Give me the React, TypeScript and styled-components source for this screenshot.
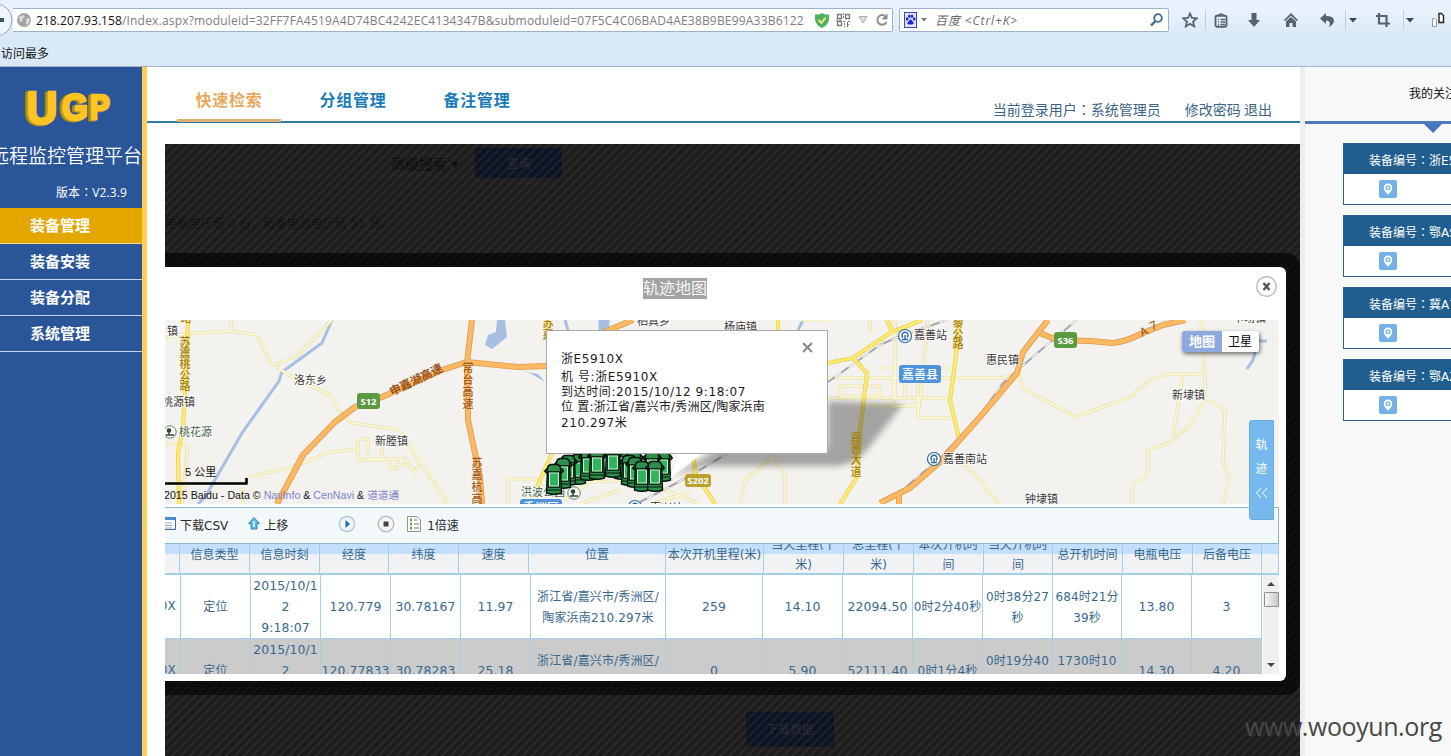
import React from "react";
import styled, { createGlobalStyle } from "styled-components";

const latin = `"Open Sans", "Noto Sans CJK SC", sans-serif`;
const ui = `"DejaVu Sans", "Noto Sans CJK SC", sans-serif`;

const Global = createGlobalStyle`
  html, body { margin: 0; padding: 0; background: #fff; }
  body { overflow: hidden; font-family: ${ui}; font-size: 12px; }
  * { box-sizing: border-box; }
  svg { display: block; flex: none; }
`;

const Page = styled.div`
  position: relative;
  display: flex;
  flex-direction: column;
  width: 1451px;
  height: 756px;
  overflow: hidden;
`;

/* centred full-width colon */
const Colon = styled.span`
  font-family: "Noto Sans CJK TC", sans-serif;
`;

/* ---------- browser chrome ---------- */

const Chrome = styled.header`
  flex: none;
  height: 67px;
  background: linear-gradient(#e4f0fa 0, #e9f3fc 8px, #d9e8f6 40px, #d9e8f6);
  border-bottom: 1px solid #9fb3c9;
`;

const ChromeRow = styled.div`
  display: flex;
  align-items: center;
  height: 40px;
`;

const BackButton = styled.div`
  flex: none;
  width: 13px;
  height: 40px;
`;

const AddressBar = styled.div`
  display: flex;
  align-items: center;
  width: 880px;
  height: 24px;
  background: #fff;
  border: 1px solid #9db1c8;
  border-left: 0;
  border-radius: 0 2px 2px 0;
  padding-left: 4px;
  font: 12px ${latin};
  color: #7d7d7d;
`;

const Url = styled.div`
  width: 771px;
  margin-left: 5px;
  letter-spacing: 0.19px;
  overflow: hidden;
  white-space: nowrap;
  b { color: #111; font-weight: 400; letter-spacing: 0.07px; }
`;

const AddressIcons = styled.div`
  display: flex;
  align-items: center;
  gap: 7px;
  margin-left: 8px;
`;

const SearchBar = styled.div`
  display: flex;
  align-items: center;
  width: 270px;
  height: 24px;
  margin-left: 6px;
  padding: 0 5px 0 4px;
  background: #fff;
  border: 1px solid #9db1c8;
  border-radius: 2px;
  color: #6c6c6c;
  font: italic 12px ${latin};
`;

const SearchHint = styled.span`
  flex: 1;
  margin-left: 8px;
  letter-spacing: 0.9px;
  white-space: nowrap;
`;

const Tools = styled.div`
  display: flex;
  align-items: center;
  margin-left: 6px;
`;

const Tool = styled.div<{ $w: number; $gap?: number; $line?: boolean }>`
  display: flex;
  flex: none;
  align-items: center;
  justify-content: center;
  width: ${(p) => p.$w}px;
  height: 20px;
  margin-left: ${(p) => p.$gap ?? 0}px;
  border-left: ${(p) => (p.$line ? "1px solid #c0cedd" : "0")};
`;

const Bookmarks = styled.div`
  height: 26px;
  padding: 2px 0 0 1px;
  line-height: 25px;
  color: #111;
`;

/* ---------- sidebar ---------- */

const Body = styled.div`
  display: flex;
  flex: 1;
  min-height: 0;
`;

const Sidebar = styled.aside`
  flex: none;
  width: 147px;
  background: #2a5699;
  border-right: 5px solid #fdcf50;
  color: #fff;
`;

const Brand = styled.div`
  height: 141px;
  overflow: hidden;
`;

const Platform = styled.div`
  display: flex;
  justify-content: flex-end;
  margin-top: 8px;
  font-size: 19px;
  font-weight: 350;
  line-height: 28px;
  white-space: nowrap;
`;

const Version = styled.div`
  margin: 12px 0 0 56px;
  font: 12px/20px ${latin};
  letter-spacing: 0.1px;
  white-space: nowrap;
`;

const MenuItem = styled.div<{ $active?: boolean }>`
  height: 36px;
  padding-left: 30px;
  border-bottom: 1px solid ${(p) => (p.$active ? "#f8dc8a" : "#c4d2e8")};
  background: ${(p) => (p.$active ? "#e4a700" : "transparent")};
  font-size: 15px;
  font-weight: 700;
  line-height: 37px;
`;

/* ---------- main ---------- */

const Main = styled.main`
  display: flex;
  flex: none;
  flex-direction: column;
  width: 1153px;
  background: #fff;
`;

const TabBar = styled.nav`
  display: flex;
  flex: none;
  height: 56px;
  padding-left: 30px;
  border-bottom: 2px solid #2f7ba5;
`;

const Tab = styled.div<{ $active?: boolean }>`
  width: 104px;
  height: 55px;
  margin-right: 20px;
  border-bottom: 3px solid ${(p) => (p.$active ? "#dcb06f" : "transparent")};
  color: ${(p) => (p.$active ? "#e9a95c" : "#1a7cb8")};
  font-size: 16px;
  font-weight: 700;
  letter-spacing: 0.8px;
  line-height: 67px;
  text-align: center;
`;

const Account = styled.div`
  display: flex;
  gap: 24px;
  height: 54px;
  margin: 0 28px 0 auto;
  color: #3b6488;
  font: 14px/84px "Noto Sans CJK SC", sans-serif;
  white-space: nowrap;
`;

const Workspace = styled.section`
  position: relative;
  flex: 1;
  margin: 21px 0 0 18px;
  overflow: hidden;
  background: #1b1b1b;
  color: #080808;
  &::after {
    content: "";
    position: absolute;
    inset: 0;
    background: repeating-linear-gradient(135deg, rgba(255, 255, 255, 0.012) 0 3.2px, rgba(255, 255, 255, 0.07) 4.4px 5.2px, rgba(255, 255, 255, 0.012) 6.36px);
  }
`;

const Filter = styled.div`
  display: flex;
  align-items: center;
  width: 402px;
  height: 38px;
  padding-left: 226px;
  font-size: 14px;
  white-space: nowrap;
`;

const FilterLine = styled.div`
  width: 305px;
  height: 1px;
  background: #141414;
`;

const DimButton = styled.div<{ $w: number; $h: number }>`
  flex: none;
  width: ${(p) => p.$w}px;
  height: ${(p) => p.$h}px;
  border-radius: 2px;
  background: #0b1020;
  color: #22272d;
  font-size: 12px;
  line-height: ${(p) => p.$h + 2}px;
  text-align: center;
`;

const Search = styled.div`
  margin-left: 17px;
`;

const Summary = styled.div`
  margin-top: 31px;
  height: 20px;
  line-height: 20px;
  letter-spacing: -0.1px;
  color: #0d0d0d;
  white-space: nowrap;
`;

const Download = styled.div`
  margin: 478px 0 0 581px;
`;

/* ---------- dialog ---------- */

const DialogFrame = styled.div`
  position: absolute;
  z-index: 2;
  left: 0;
  top: 109px;
  width: 1135px;
  height: 442px;
  padding: 14px 14px 14px 0;
  border-radius: 0 14px 14px 0;
  background: rgba(0, 0, 0, 0.6);
`;

const Dialog = styled.div`
  position: relative;
  height: 414px;
  border-radius: 0 6px 6px 0;
  background: #fff;
`;

const DialogTitle = styled.div`
  display: flex;
  height: 53px;
  padding: 11px 9px 0 478px;
  justify-content: space-between;
`;

const TitleText = styled.div`
  height: 21px;
  background: #a3a3a3;
  color: #fff;
  font-size: 16px;
  font-weight: 350;
  line-height: 22px;
`;

const MapArea = styled.div`
  position: relative;
  width: 1114px;
  height: 184px;
  overflow: hidden;
  background: #f3f2ef;
`;

const Popup = styled.div`
  position: absolute;
  left: 381px;
  top: 10px;
  width: 282px;
  height: 124px;
  padding: 19px 14px 0;
  border: 1px solid #a9a9a9;
  background: #fff;
  color: #1c1c1c;
  line-height: 15.2px;
  letter-spacing: 0.2px;
  white-space: nowrap;
`;

const PopupHead = styled.div`
  height: 20px;
  line-height: 18px;
`;

const Wide = styled.span`
  letter-spacing: 0.6px;
`;

const PopupClose = styled.div`
  position: absolute;
  right: 14px;
  top: 11px;
`;

const MapSwitch = styled.div`
  position: absolute;
  left: 1017px;
  top: 11px;
  display: flex;
  width: 77px;
  height: 21px;
  border-radius: 2px;
  background: #fff;
  box-shadow: 1px 2px 4px rgba(0, 0, 0, 0.55);
  color: #000;
  font: 13px/20px "Noto Sans CJK SC", sans-serif;
  text-align: center;
`;

const SwitchItem = styled.div<{ $on?: boolean }>`
  width: ${(p) => (p.$on ? 40 : 36)}px;
  background: ${(p) => (p.$on ? "#8ea8e0" : "transparent")};
  color: ${(p) => (p.$on ? "#fff" : "#000")};
  font-weight: ${(p) => (p.$on ? 700 : 400)};
  font-size: ${(p) => (p.$on ? 13 : 12)}px;
  border-radius: 2px 0 0 2px;
`;

const TrackTab = styled.div`
  position: absolute;
  left: 1084px;
  top: 153px;
  width: 25px;
  height: 100px;
  padding-top: 12px;
  border: 1px solid #69addf;
  border-radius: 3px 0 0 3px;
  background: #76b9ef;
  color: #fff;
  line-height: 24px;
  text-align: center;
`;

const Toolbar = styled.div`
  display: flex;
  align-items: center;
  width: 1114px;
  height: 37px;
  margin-top: 3px;
  padding-bottom: 4px;
  border: solid #86b8d4;
  border-width: 1px 1px 1px 0;
  background: #f3f8fb;
  color: #2b2b2b;
`;

const ToolLabel = styled.span<{ $l: number; $r: number }>`
  margin: 2px ${(p) => p.$r}px 0 ${(p) => p.$l}px;
  white-space: nowrap;
`;

const Grid = styled.div`
  width: 1114px;
  color: #39688f;
`;

const GridHead = styled.div`
  display: flex;
  height: 31px;
  overflow: hidden;
  background: linear-gradient(#c4dffc 10px, #f1f2f4 10px);
  border-bottom: 2px solid #a5cfe8;
`;

const HeadCell = styled.div<{ $w: number }>`
  display: flex;
  flex: none;
  align-items: center;
  justify-content: center;
  width: ${(p) => p.$w}px;
  height: 31px;
  padding-bottom: 9px;
  border-right: 1px solid #a5cfe8;
  line-height: 20px;
  text-align: center;
  white-space: pre;
`;

const GridBody = styled.div`
  display: flex;
  justify-content: space-between;
  height: 99px;
  overflow: hidden;
`;

const Row = styled.div<{ $alt?: boolean }>`
  display: flex;
  width: 1097px;
  height: 64px;
  background: ${(p) => (p.$alt ? "#cbcbcb" : "#fff")};
  border-bottom: 1px solid #a5cfe8;
`;

const Cell = styled.div<{ $w: number; $end?: boolean; $cjk?: boolean }>`
  display: flex;
  flex: none;
  align-items: center;
  justify-content: ${(p) => (p.$end ? "flex-end" : "center")};
  width: ${(p) => p.$w}px;
  padding-right: ${(p) => (p.$end ? 4 : 0)}px;
  padding-top: ${(p) => (p.$cjk ? 2 : 0)}px;
  border-right: 1px solid #a5cfe8;
  letter-spacing: 0.15px;
  line-height: 21px;
  text-align: center;
  white-space: pre;
  overflow: hidden;
`;

const Digits = styled.span`
  font-size: 12.4px;
  letter-spacing: 0.1px;
`;

const Scrollbar = styled.div`
  display: flex;
  flex-direction: column;
  align-items: center;
  width: 16px;
  background: #f0f0f0;
`;

const Thumb = styled.div`
  width: 15px;
  height: 15px;
  margin: 6px 0 auto;
  border: 1px solid #8f8f8f;
  border-radius: 1px;
  background: linear-gradient(90deg, #f7f7f7, #c9c9c9);
`;

/* ---------- right panel ---------- */

const Watch = styled.aside`
  flex: none;
  width: 151px;
  border-left: 5px solid #eeeeee;
  background: #f8f8f8;
`;

const WatchTitle = styled.div`
  height: 57px;
  padding-left: 104px;
  border-bottom: 3px solid #507ab6;
  color: #111;
  line-height: 54px;
  white-space: nowrap;
  overflow: hidden;
`;

const Pointer = styled.div`
  width: 0;
  margin-left: 119px;
  border: 9px solid transparent;
  border-top-color: #4377c6;
  border-bottom: 0;
`;

const Cards = styled.div`
  display: flex;
  flex-direction: column;
  gap: 10px;
  padding: 10px 0 0 38px;
`;

const Card = styled.div`
  width: 180px;
  height: 62px;
  border: 1px solid #2f5f8b;
  background: #fff;
`;

const CardHead = styled.div`
  height: 30px;
  padding-left: 25px;
  background: #1f5e8e;
  color: #fff;
  line-height: 32px;
  white-space: nowrap;
`;

const CardBody = styled.div`
  padding: 6px 0 0 35px;
`;

const Watermark = styled.div`
  position: absolute;
  z-index: 5;
  left: 1245px;
  top: 708px;
  color: #484848;
  font: 25px/36px "Open Sans", sans-serif;
  letter-spacing: -0.42px;
`;

/* ---------- map drawing ---------- */

const minor = [
  "M165 338L185 334L230 331L257 335L270 362L290 376L330 395L340 412L352 423L400 430L412 450L448 504",
  "M231 320V331M332 320L298 355L273 366",
  "M248 478L260 474L290 468L330 452L358 449V439H368V459H398V465H405V458L415 473L420 460M358 449V460H382V440M390 459V468H398",
  "M508 504V479H535L545 490M165 443L188 445L182 504M243 487V504",
  "M565 500L590 482L640 480L700 504M650 504L690 492M580 504L620 490",
  "M775 455L745 480L740 504M770 455L785 475V504M828 378H1000L1017 374M840 386H880V396H840ZM860 405L918 406M895 320V400M928 320L918 418H951M870 320V333M880 368H950",
  "M828 398H948M918 385V418M894 373V408M1019 373L1023 388L1075 417L1130 397L1150 380L1168 374H1204M1200 320L1204 330L1205 398L1225 410L1223 460L1229 478L1223 504M1183 374L1172 442L1148 450V475L1132 485V504M1205 400L1190 425L1175 438M962 463L978 477L998 504",
  "M890 408L918 404M905 370V398M750 320L755 330M800 320H828",
];
const yellow = [
  "M188 320L187 350L183 427L178 453L179 504",
  "M828 363L853 358L867 373L860 430L857 477L840 504M853 358L890 333L922 320M887 320L893 334",
  "M960 320L955 363L950 400L960 443",
  "M693 450L695 473L715 504M552 453L537 487M548 320V332M778 320V332",
];
const orange = [
  "M277 504L303 455L335 422L355 407L382 397L442 370L467 362L518 367L547 366M602 333L633 320",
  "M472 320L467 363L468 420L480 477L482 504",
  "M1048 320L1023 352L1017 373L980 417L940 462L910 488L880 503M899 494V504",
  "M1040 333L1057 340L1090 341L1113 343Q1125 342 1143 333L1163 325L1185 320",
];
const rails = ["M1077 320L1048 344L1027 362L1003 383L980 415L940 458L900 492", "M947 320L900 336L880 345L828 382", "M728 453L690 476L640 502"];

const cars: [number, number][] = [
  [622, 450], [634, 452], [578, 455], [568, 456], [663, 452], [652, 452], [563, 459],
  [588, 451], [597, 450], [613, 448], [629, 456], [635, 458], [642, 462], [554, 465], [655, 462],
];

const Label = ({ x, y, t, s = 11, c = "#3b3b3b", r = 0, b }: { x: number; y: number; t: string; s?: number; c?: string; r?: number; b?: boolean }) => (
  <text x={x} y={y} fontSize={s} fill={c} fontWeight={b ? 600 : 400} transform={r ? `rotate(${r} ${x} ${y})` : undefined}
    stroke="#fff" strokeWidth={b ? 0 : 2} strokeOpacity={0.7} paintOrder="stroke">{t}</text>
);

const Down = ({ x, y, t, c, step = 12, s = 11 }: { x: number; y: number; t: string; c: string; step?: number; s?: number }) => (
  <g fill={c} fontSize={s} textAnchor="middle" fontWeight={500}>
    {t.split("").map((ch, i) => <text key={i} x={x} y={y + i * step}>{ch}</text>)}
  </g>
);

const Shield = ({ x, y, w, t, c }: { x: number; y: number; w: number; t: string; c: string }) => (
  <g>
    <rect x={x} y={y} width={w} height={w > 24 ? 13 : 16} rx={3} fill={c} />
    <text x={x + w / 2} y={y + (w > 24 ? 10 : 11.5)} fontSize={9.5} fontWeight={700} fill="#fff" textAnchor="middle" fontFamily="Open Sans">{t}</text>
  </g>
);

const Station = ({ x, y }: { x: number; y: number }) => (
  <g fill="none" stroke="#2c66a8">
    <circle cx={x} cy={y} r={6.5} fill="#fff" strokeWidth={1.2} />
    <path d={`M${x - 2} ${y + 1.5}A3 3 0 1 1 ${x + 2} ${y + 1.5}M${x} ${y - 1}V${y + 3}M${x - 3} ${y + 3.5}H${x + 3}`} strokeWidth={1.4} />
  </g>
);

const Park = ({ x, y }: { x: number; y: number }) => (
  <g>
    <circle cx={x} cy={y} r={6.2} fill="#fff" stroke="#5f7a62" />
    <path d={`M${x - 4} ${y + 3}H${x + 4}M${x - 1} ${y}V${y + 3}`} stroke="#2c4a30" strokeWidth={1.4} />
    <circle cx={x - 1} cy={y - 1.5} r={2.3} fill="#2c4a30" />
  </g>
);

const MapDrawing = () => (
  <svg width="1114" height="184" viewBox="165 320 1114 184" fontFamily="Noto Sans CJK SC">
    <defs><filter id="soft" x="-10%" y="-10%" width="120%" height="120%"><feGaussianBlur stdDeviation="3" /></filter></defs>
    <g fill="none" stroke="#a6bfe2" strokeWidth={3}>
      <path d="M332 320L322 343L282 372L279 381L242 433L205 497L198 504" />
      <path d="M565 320L568 330M798 330L803 320" strokeWidth={3} />
      <path d="M604 320V330" strokeWidth={11} />
      <path d="M1267 341H1258L1253 360L1247 369" strokeWidth={3} />
    </g>
    <path d="M497 320H505L507 337L492 349L485 345L488 335L496 332Z M518 370L530 373L545 382L538 374Z" fill="#a6bfe2" />
    <g fill="none" strokeLinejoin="round">
      {minor.map((d) => <path key={d} d={d} stroke="#e9e2a6" strokeWidth={3.2} />)}
      {minor.map((d) => <path key={d} d={d} stroke="#fbf9dc" strokeWidth={1.6} />)}
      {rails.map((d) => <path key={d} d={d} stroke="#a5a5ab" strokeWidth={2} />)}
      {rails.map((d) => <path key={d} d={d} stroke="#f7f7f7" strokeWidth={1.3} strokeDasharray="8 9" />)}
      {yellow.map((d) => <path key={d} d={d} stroke="#e5cf58" strokeWidth={4.2} />)}
      {yellow.map((d) => <path key={d} d={d} stroke="#fdea6e" strokeWidth={2.8} />)}
      {orange.map((d) => <path key={d} d={d} stroke="#dd9a4c" strokeWidth={6} />)}
      {orange.map((d) => <path key={d} d={d} stroke="#fcb963" strokeWidth={4.4} />)}
    </g>
    <path d="M828 401L903 404L867 450Q855 464 838 466H705L672 476L720 448H828Z" fill="#000" opacity={0.32} filter="url(#soft)" />
    <Label x={167} y={335} t="镇" /><Label x={294} y={384} t="洛东乡" /><Label x={162} y={406} t="桃源镇" />
    <Label x={179} y={436} t="桃花源" c="#49654c" /><Label x={375} y={445} t="新塍镇" /><Label x={637} y={325} t="栖真乡" />
    <Label x={724} y={331} t="杨庙镇" /><Label x={914} y={339} t="嘉善站" /><Label x={986} y={364} t="惠民镇" />
    <Label x={1172} y={399} t="新埭镇" /><Label x={943} y={463} t="嘉善南站" /><Label x={1025} y={503} t="钟埭镇" />
    <Label x={1233} y={322} t="卡场镇" /><Label x={521} y={496} t="洪波公园" c="#49654c" /><Label x={650} y={512} t="嘉兴站" />
    <Label x={392} y={396} t="申嘉湖高速" c="#9a5218" r={-26} s={11.5} b />
    <Down x={186} y={322} t="路" c="#a5810a" /><Down x={185} y={346} t="苏震桃公路" c="#a5810a" step={11} />
    <Down x={468} y={372} t="常台高速" c="#a25a1e" /><Down x={477} y={467} t="苏嘉杭高" c="#a25a1e" />
    <Down x={548} y={327} t="苏嘉" c="#a5810a" /><Down x={958} y={327} t="黎公路" c="#a5810a" step={10.5} />
    <Down x={856} y={442} t="嘉善大道" c="#a5810a" step={11.2} />
    <g fontSize={12} fill="#8f4a12" fontFamily="Open Sans"><text x={1142} y={337} transform="rotate(-25 1142 337)">A</text><text x={1152} y={331} transform="rotate(-25 1152 331)">7</text></g>
    <Shield x={357} y={393} w={23} t="S12" c="#5a9a41" /><Shield x={1054} y={332} w={23} t="S36" c="#5a9a41" /><Shield x={685} y={474} w={26} t="S202" c="#bda02c" />
    <rect x={899} y={365} width={42} height={18} rx={3} fill="#4f93dc" /><text x={920} y={378.5} fontSize={12} fontWeight={500} fill="#fff" textAnchor="middle">嘉善县</text>
    <rect x={520} y={499} width={42} height={18} rx={3} fill="#4f93dc" /><text x={541} y={512} fontSize={12} fontWeight={500} fill="#fff" textAnchor="middle">秀洲区</text>
    <Station x={905} y={336} /><Station x={934} y={459} /><Station x={635} y={507} />
    <Park x={170} y={432} /><Park x={574} y={493} />
    {cars.map(([x, y], i) => (
      <g key={i} transform={`translate(${x} ${y})`} stroke="#05120a">
        <path d="M-7 8L-9 6L-6 3M7 3L9 6L7 8" fill="none" strokeWidth={1.8} />
        <path d="M-6.500 3Q-6 0 -3 -.5H3Q6 0 6.500 3L7.500 28Q0 30.500 -7.500 28Z" fill="#2c8f4b" strokeWidth={1.4} />
        <path d="M-4.500 8H4.500V21H-4.500Z" fill="#2fb45b" stroke="#cfe6d3" strokeWidth={1.2} />
        <path d="M-5.700 6.700H5.700V22.300H-5.700ZM-7 25H7" fill="none" strokeWidth={1} />
      </g>
    ))}
    <path d="M679 452L670 478L704 452Z" fill="#fff" />
    <path d="M165 483.500H247.500M246.500 478V484" fill="none" stroke="#000" strokeWidth={2.6} />
    <text x={185} y={476} fontSize={11} fill="#111" fontFamily="Liberation Sans, Noto Sans CJK SC">5 公里</text>
    <text x={164} y={499} fontSize={10.6} fill="#111" fontFamily="Liberation Sans, Noto Sans CJK SC" textLength={235} lengthAdjust="spacing">
      2015 Baidu - Data © <tspan fill="#7c7fd0">NavInfo</tspan> &amp; <tspan fill="#7c7fd0">CenNavi</tspan> &amp; <tspan fill="#7c7fd0">道道通</tspan>
    </text>
  </svg>
);

const Caret = ({ c = "#3d4650" }: { c?: string }) => <svg width="8" height="5"><path d="M0 0H8L4 4.500Z" fill={c} /></svg>;

const Pin = () => (
  <svg width="18" height="18" viewBox="0 0 18 18">
    <rect width="18" height="18" rx="2" fill="#73b1e8" />
    <path d="M9 3.500A4.300 4.300 0 0 1 13.300 7.800C13.300 10.500 10.500 12.500 9 15C7.500 12.500 4.700 10.500 4.700 7.800A4.300 4.300 0 0 1 9 3.500Z" fill="#fff" />
    <circle cx="9" cy="7.800" r="1.900" fill="#fff" stroke="#73b1e8" strokeWidth="1.200" />
  </svg>
);

const columns: [string, number, number][] = [
  ["", 15, 16], ["信息类型", 70, 70], ["信息时刻", 70, 70], ["经度", 69, 70], ["纬度", 70, 70], ["速度", 70, 70],
  ["位置", 137, 135], ["本次开机里程(米)", 98, 97], ["当天里程(千\n米)", 80, 80], ["总里程(千\n米)", 70, 70],
  ["本次开机时\n间", 70, 70], ["当天开机时\n间", 69, 70], ["总开机时间", 70, 69], ["电瓶电压", 70, 70], ["后备电压", 69, 70],
];

const rows = [
  ["浙E5910X", "定位", "2015/10/1\n2\n9:18:07", "120.779", "30.78167", "11.97", "浙江省/嘉兴市/秀洲区/\n陶家浜南210.297米", "259", "14.10", "22094.50", "0时2分40秒", "0时38分27\n秒", "684时21分\n39秒", "13.80", "3"],
  ["浙E5910X", "定位", "2015/10/1\n2\n9:17:07", "120.77833", "30.78283", "25.18", "浙江省/嘉兴市/秀洲区/\n陶家浜南210.297米", "0", "5.90", "52111.40", "0时1分4秒", "0时19分40\n秒", "1730时10\n分4秒", "14.30", "4.20"],
];

const isNumeric = (t: string) => /^[\d./:\n]+$/.test(t);

const ink = "#566472";

export default function App() {
  return (
    <Page>
      <Global />
      <Chrome>
        <ChromeRow>
          <BackButton>
            <svg width="13" height="40"><circle cx="-4" cy="20" r="16" fill="#edf4fb" stroke="#8fa3ba" /><path d="M0 18H4V22H0Z" fill="#444f5c" /></svg>
          </BackButton>
          <AddressBar>
            <svg width="14" height="14"><circle cx="7" cy="7" r="7" fill="#a3a3a3" /><path d="M2 4L6 2L8 4L5 6L6 8L3 9ZM9 6L13 5L12 10L9 12Z" fill="#dcdcdc" /></svg>
            <Url><b>218.207.93.158</b>/Index.aspx?moduleid=32FF7FA4519A4D74BC4242EC4134347B&amp;submoduleid=07F5C4C06BAD4AE38B9BE99A33B6122</Url>
            <AddressIcons>
              <svg width="14" height="15"><path d="M0 1.500Q4 2 7 0Q10 2 14 1.500V7Q13 12 7 15Q1 12 0 7Z" fill="#4db45e" /><path d="M3.500 7L6.500 10L10.500 4.500" fill="none" stroke="#f7e78a" strokeWidth="2" /></svg>
              <svg width="15" height="14" fill="none" stroke="#777"><path d="M1.500 1.500H5.500V5.500H1.500ZM9.500 1.500H13.500V5.500H9.500ZM1.500 8.500H5.500V12.500H1.500Z" strokeWidth="1.300" /><path d="M7.500 0V6M7 8.500H10M12 8.500H14M8.500 10V14M11 11.500H14M11.500 9V14M0 7.200H6" strokeDasharray="2 1" /></svg>
              <svg width="10" height="8"><path d="M1 .5H9L5 7Z" fill="#dedede" stroke="#aaa" /></svg>
              <svg width="14" height="14" fill="none" stroke="#8a8f96" strokeWidth="2"><path d="M11 4A4.800 4.800 0 1 0 11.500 9" /><path d="M12 1V6H7" fill="#8a8f96" strokeWidth="1" /></svg>
            </AddressIcons>
          </AddressBar>
          <SearchBar>
            <svg width="14" height="16"><rect x=".5" y=".5" width="12" height="15" fill="#dfe3ff" stroke="#2f4bb5" /><g fill="#2323d6"><ellipse cx="3.200" cy="7" rx="1.300" ry="1.700" /><ellipse cx="5.300" cy="4.300" rx="1.200" ry="1.700" /><ellipse cx="8" cy="4.300" rx="1.200" ry="1.700" /><ellipse cx="10.200" cy="7" rx="1.300" ry="1.700" /><path d="M6.600 7Q8 9 9.800 10.500Q10 13 6.600 12.500Q3 13 3.400 10.500Q5 9 6.600 7Z" /></g></svg>
            <svg width="9" height="4"><path d="M3 0H9L6 3.500Z" fill="#777" /></svg>
            <SearchHint>百度 &lt;Ctrl+K&gt;</SearchHint>
            <svg width="13" height="14" fill="none" stroke="#3d6897"><circle cx="8" cy="5" r="3.800" strokeWidth="1.800" /><path d="M5.500 8L1 12.500" strokeWidth="2.400" /></svg>
          </SearchBar>
          <Tools>
            <Tool $w={30}><svg width="16" height="16"><path d="M8 1.500L9.900 6L14.800 6.400L11.100 9.600L12.200 14.400L8 11.800L3.800 14.400L4.900 9.600L1.200 6.400L6.100 6Z" fill="none" stroke={ink} strokeWidth="1.800" /></svg></Tool>
            <Tool $w={30} $line><svg width="14" height="15" fill="none" stroke={ink} strokeWidth="1.900"><rect x="1.500" y="2.800" width="11" height="11" rx="1.500" /><path d="M4 2.500Q7 -.5 10 2.500M4 6.500H5M6.500 6.500H11M4 9H5M6.500 9H11M4 11.500H5M6.500 11.500H11" strokeWidth="1.400" /></svg></Tool>
            <Tool $w={38}><svg width="14" height="15"><path d="M4.500 0H9.500V7H13L7 14L1 7H4.500Z" fill={ink} /></svg></Tool>
            <Tool $w={36}><svg width="16" height="15"><path d="M8 0L15 7L14 8.300L8 2.800L2 8.300L1 7ZM3 8.500L8 4L13 8.500V14H9.500V10H6.500V14H3Z" fill={ink} /></svg></Tool>
            <Tool $w={36}><svg width="15" height="14"><path d="M6 0V3Q14 3 14 8Q13 12 9 14Q12 8 6 7.500V11L0 5.500Z" fill={ink} /></svg></Tool>
            <Tool $w={14} $line><Caret /></Tool>
            <Tool $w={40} $gap={4}><svg width="16" height="16" fill="none" stroke={ink} strokeWidth="2.200"><path d="M4 1V11.500H15M1 4H11.500V15" /></svg></Tool>
            <Tool $w={12} $line><Caret /></Tool>
            <Tool $w={16} $gap={15}><svg width="14" height="16" fill="#fff"><path d="M1.500 6.500H4L5.500 8V14.500H1.500Z" stroke="#999" /><path d="M8 1.500H10.500L12.500 3.500V10.500H8Z" stroke="#222" strokeWidth="1.400" /></svg></Tool>
          </Tools>
        </ChromeRow>
        <Bookmarks>访问最多</Bookmarks>
      </Chrome>
      <Body>
        <Sidebar>
          <Brand>
            <svg width="142" height="67" viewBox="0 67 142 67" fontFamily="Liberation Sans" fontWeight="700">
              {([["#a88420", -3, 0.5], ["#c09524", -1.5, 0.5], ["#ffc41f", 0, 0]] as [string, number, number][]).map(([c, dx, dy]) => (
                <g key={c} fill={c} stroke={c} strokeWidth="2.400" transform={`translate(${dx} ${dy})`}>
                  <text x="26.500" y="124" fontSize="47" textLength="31" lengthAdjust="spacingAndGlyphs">U</text>
                  <text x="62" y="120" fontSize="37" textLength="26" lengthAdjust="spacingAndGlyphs">G</text>
                  <text x="90" y="119" fontSize="35" textLength="20" lengthAdjust="spacingAndGlyphs">P</text>
                </g>
              ))}
            </svg>
            <Platform>远程监控管理平台</Platform>
            <Version>版本<Colon>：</Colon>V2.3.9</Version>
          </Brand>
          <MenuItem $active>装备管理</MenuItem>
          <MenuItem>装备安装</MenuItem>
          <MenuItem>装备分配</MenuItem>
          <MenuItem>系统管理</MenuItem>
        </Sidebar>
        <Main>
          <TabBar>
            <Tab $active>快速检索</Tab>
            <Tab>分组管理</Tab>
            <Tab>备注管理</Tab>
            <Account><span>当前登录用户<Colon>：</Colon>系统管理员</span><span>修改密码 退出</span></Account>
          </TabBar>
          <Workspace>
            <Filter>高级搜索 ▾<Search><DimButton $w={87} $h={30}>查询</DimButton></Search></Filter>
            <FilterLine />
            <Summary>电瓶电压低 0 台，后备电池电压低 31 台。</Summary>
            <Download><DimButton $w={88} $h={35}>下载数据</DimButton></Download>
            <DialogFrame>
              <Dialog>
                <DialogTitle>
                  <TitleText>轨迹地图</TitleText>
                  <svg width="22" height="22" style={{ marginTop: -2 }}><circle cx="11.500" cy="10.500" r="9.800" fill="#fff" stroke="#bdbdbd" strokeWidth="1.500" /><path d="M8.500 7L14.500 14M14.500 7L8.500 14" stroke="#555" strokeWidth="2.400" /></svg>
                </DialogTitle>
                <MapArea>
                  <MapDrawing />
                  <Popup>
                    <PopupHead><Wide>浙E5910X</Wide></PopupHead>
                    <div><Wide>机 号:浙E5910X</Wide></div>
                    <div><Wide>到达时间:2015/10/12 9:18:07</Wide></div>
                    <div>位 置:浙江省/嘉兴市/秀洲区/陶家浜南</div>
                    <div><Wide>210.297米</Wide></div>
                    <PopupClose><svg width="11" height="11"><path d="M1 1L10 10M10 1L1 10" stroke="#888" strokeWidth="2" /></svg></PopupClose>
                  </Popup>
                  <MapSwitch><SwitchItem $on>地图</SwitchItem><SwitchItem>卫星</SwitchItem></MapSwitch>
                </MapArea>
                <Toolbar>
                  <svg width="11" height="13"><path d="M0 .5H10.500V12.500H0" fill="#fff" stroke="#3f6fa8" /><path d="M0 0H10V3H0Z" fill="#4b8bd0" /><path d="M0 6H7M0 8.500H7M0 11H7" stroke="#8aa9c8" /></svg>
                  <ToolLabel $l={4} $r={20}>下载CSV</ToolLabel>
                  <svg width="12" height="13"><path d="M6 .5L11.500 6.500H9V12H3V6.500H.5Z" fill="#5bb9e4" stroke="#3a86b4" /><path d="M5 4H7V10H5Z" fill="#c9ecfa" /></svg>
                  <ToolLabel $l={4} $r={50}>上移</ToolLabel>
                  <svg width="18" height="18"><circle cx="9" cy="9" r="7.600" fill="#eef6fc" stroke="#b9cadb" strokeWidth="1.500" /><path d="M7.500 5L12 9L7.500 13Z" fill="#2269ae" /></svg>
                  <svg width="18" height="18" style={{ marginLeft: 21 }}><circle cx="9" cy="9" r="7.800" fill="#f6f6f6" stroke="#bdbdbd" strokeWidth="1.500" /><path d="M6.500 6.500H11.500V11.500H6.500Z" fill="#444" /></svg>
                  <svg width="16" height="18" style={{ marginLeft: 11 }}><path d="M1.500 1.500H11L14.500 5V16.500H1.500Z" fill="#f7f9f7" stroke="#8d968d" /><path d="M4 5H6M4 9H6M4 13H6" stroke="#57a552" strokeWidth="2.400" /><path d="M8 5H11M8 9H13M8 13H13" stroke="#777" /></svg>
                  <ToolLabel $l={5} $r={0}>1倍速</ToolLabel>
                </Toolbar>
                <Grid>
                  <GridHead>{columns.map(([t, w], i) => <HeadCell key={i} $w={w}>{t}</HeadCell>)}<HeadCell $w={17}> </HeadCell></GridHead>
                  <GridBody>
                    <div>
                      {rows.map((r, n) => (
                        <Row key={n} $alt={n === 1}>
                          {r.map((t, i) => (
                            <Cell key={i} $w={columns[i][2]} $end={i === 0} $cjk={i > 0 && !isNumeric(t)}>
                              {isNumeric(t) ? <Digits>{t}</Digits> : t}
                            </Cell>
                          ))}
                        </Row>
                      ))}
                    </div>
                    <Scrollbar>
                      <svg width="8" height="4" style={{ marginTop: 7 }}><path d="M0 4L4 0L8 4Z" fill="#444" /></svg>
                      <Thumb />
                      <svg width="8" height="4" style={{ marginBottom: 7 }}><path d="M0 0H8L4 4Z" fill="#444" /></svg>
                    </Scrollbar>
                  </GridBody>
                </Grid>
                <TrackTab>轨<br />迹<br />
                  <svg width="23" height="24" fill="none" stroke="#fff"><path d="M11 7L6.500 12L11 17M17 7L12.500 12L17 17" /></svg>
                </TrackTab>
              </Dialog>
            </DialogFrame>
          </Workspace>
        </Main>
        <Watch>
          <WatchTitle>我的关注</WatchTitle>
          <Pointer />
          <Cards>
            {["浙E5910X", "鄂AS1101", "冀A72016", "鄂AZ2203"].map((n) => (
              <Card key={n}>
                <CardHead>装备编号<Colon>：</Colon>{n}</CardHead>
                <CardBody><Pin /></CardBody>
              </Card>
            ))}
          </Cards>
        </Watch>
      </Body>
      <Watermark>www.wooyun.org</Watermark>
    </Page>
  );
}
